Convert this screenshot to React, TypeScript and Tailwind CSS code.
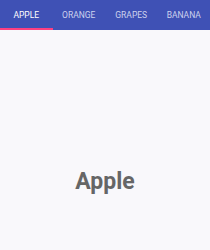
import React, { useState } from 'react';

const TABS = ['Apple', 'Orange', 'Grapes', 'Banana'];

export default function App() {
  const [active, setActive] = useState(0);

  return (
    <div
      className="w-[210px] h-[250px] flex flex-col bg-[#f9f8fb]"
      style={{ fontFamily: 'Roboto, "Liberation Sans", sans-serif' }}
    >
      {/* Tab bar */}
      <div className="h-[30px] bg-[#3f51b5] flex shrink-0">
        {TABS.map((tab, i) => (
          <button
            key={tab}
            onClick={() => setActive(i)}
            className={`flex-1 flex flex-col items-center justify-end ${
              i === active ? 'text-white' : 'text-[#cdd2ee]'
            }`}
          >
            <span className="text-[8.5px] uppercase leading-none mb-[9px]">{tab}</span>
            <span className={`h-[2px] w-full ${i === active ? 'bg-[#ff4081]' : 'bg-transparent'}`} />
          </button>
        ))}
      </div>

      {/* Content */}
      <div className="flex-1 flex items-center justify-center pt-[84px]">
        <span className="text-[23px] font-bold text-[#666666]">{TABS[active]}</span>
      </div>
    </div>
  );
}
